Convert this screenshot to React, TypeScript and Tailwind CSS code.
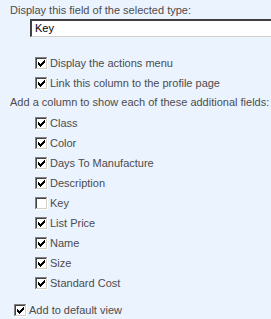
const fields = [
  { name: 'Class', checked: true },
  { name: 'Color', checked: true },
  { name: 'Days To Manufacture', checked: true },
  { name: 'Description', checked: true },
  { name: 'Key', checked: false },
  { name: 'List Price', checked: true },
  { name: 'Name', checked: true },
  { name: 'Size', checked: true },
  { name: 'Standard Cost', checked: true },
]

// classic 3d checkbox, drawn pixel by pixel
const tick = ['......#', '.....##', '#...###', '##.###.', '#####..', '.###...', '..#....']

function Box({ checked }: { checked: boolean }) {
  return (
    <svg width="13" height="13" viewBox="0 0 13 13" shapeRendering="crispEdges" className="shrink-0">
      <rect x="0" y="0" width="13" height="13" fill="#ffffff" />
      <rect x="0" y="0" width="12" height="1" fill="#808080" />
      <rect x="0" y="0" width="1" height="12" fill="#808080" />
      <rect x="1" y="1" width="10" height="1" fill="#404040" />
      <rect x="1" y="1" width="1" height="10" fill="#404040" />
      <rect x="1" y="11" width="11" height="1" fill="#d4d0c8" />
      <rect x="11" y="1" width="1" height="11" fill="#d4d0c8" />
      {checked &&
        tick.map((row, y) =>
          row.split('').map((c, x) =>
            c === '#' ? <rect key={`${x}-${y}`} x={3 + x} y={3 + y} width="1" height="1" fill="#000000" /> : null
          )
        )}
    </svg>
  )
}

function Row({ label, checked, className = '' }: { label: string; checked: boolean; className?: string }) {
  return (
    <div className={`flex items-center gap-[2px] h-[20px] ${className}`}>
      <Box checked={checked} />
      <span>{label}</span>
    </div>
  )
}

export default function App() {
  return (
    <div className="w-[271px] h-[319px] overflow-hidden bg-[#ebf3ff] text-[#4c4c4c] text-[11px] leading-[13px] font-['Liberation_Sans',Arial,sans-serif]">
      <div className="pl-[10px] pt-[4px] whitespace-nowrap">Display this field of the selected type:</div>

      <div className="ml-[30px] mt-[2px] w-[260px] h-[18px] bg-white border-t-2 border-l-2 border-t-[#404040] border-l-[#404040] border-b border-r border-b-[#d4d0c8] border-r-[#d4d0c8] flex items-center pl-[3px] text-black">
        Key
      </div>

      <div className="pl-[35px] mt-[16px]">
        <Row label="Display the actions menu" checked className="h-[19px]" />
        <Row label="Link this column to the profile page" checked className="h-[19px]" />
      </div>

      <div className="pl-[10px] mt-[3px] whitespace-nowrap">Add a column to show each of these additional fields:</div>

      <div className="pl-[35px] mt-[4px]">
        {fields.map((f) => (
          <Row key={f.name} label={f.name} checked={f.checked} />
        ))}
      </div>

      <div className="pl-[14px] mt-[7px]">
        <Row label="Add to default view" checked />
      </div>
    </div>
  )
}
